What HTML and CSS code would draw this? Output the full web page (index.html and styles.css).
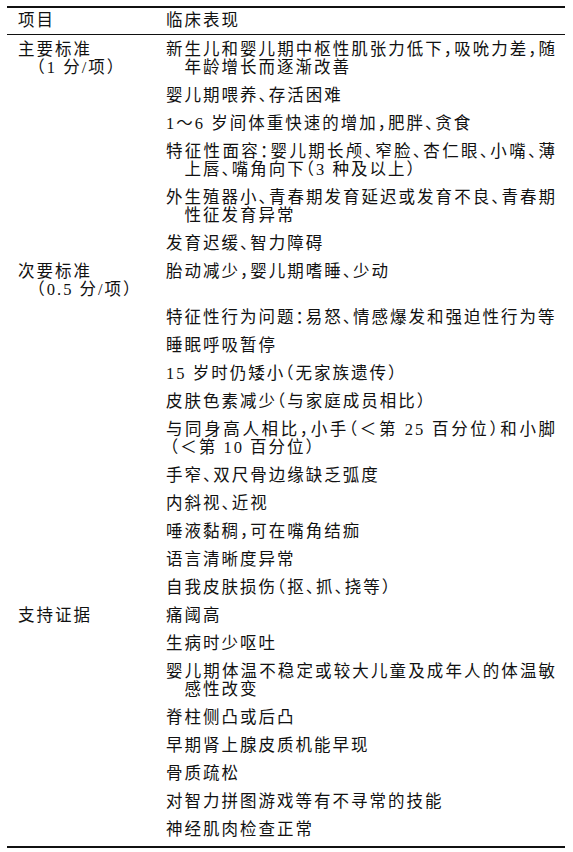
FILE: index.html
```html
<!DOCTYPE html>
<html lang="zh-CN">
<head>
<meta charset="utf-8">
<title>诊断标准</title>
<link rel="stylesheet" href="styles.css">
</head>
<body>
<div class="tbl">
  <div class="row head"><div class="c1">项目</div><div class="c2">临床表现</div></div>
  <div class="tbody">
    <div class="row"><div class="c1"><div>主要标准</div><div class="ind">（1 分/项）</div></div><div class="c2"><div class="jl">新生儿和婴儿期中枢性肌张力低下，吸吮力差，随</div><div class="ind">年龄增长而逐渐改善</div></div></div>
    <div class="row"><div class="c1"></div><div class="c2">婴儿期喂养、存活困难</div></div>
    <div class="row"><div class="c1"></div><div class="c2">1～6 岁间体重快速的增加，肥胖、贪食</div></div>
    <div class="row"><div class="c1"></div><div class="c2"><div class="jl">特征性面容：婴儿期长颅、窄脸、杏仁眼、小嘴、薄</div><div class="ind">上唇、嘴角向下（3 种及以上）</div></div></div>
    <div class="row"><div class="c1"></div><div class="c2"><div class="jl">外生殖器小、青春期发育延迟或发育不良、青春期</div><div class="ind">性征发育异常</div></div></div>
    <div class="row"><div class="c1"></div><div class="c2">发育迟缓、智力障碍</div></div>
    <div class="row"><div class="c1"><div>次要标准</div><div class="ind">（0.5 分/项）</div></div><div class="c2">胎动减少，婴儿期嗜睡、少动</div></div>
    <div class="row"><div class="c1"></div><div class="c2">特征性行为问题：易怒、情感爆发和强迫性行为等</div></div>
    <div class="row"><div class="c1"></div><div class="c2">睡眠呼吸暂停</div></div>
    <div class="row"><div class="c1"></div><div class="c2">15 岁时仍矮小（无家族遗传）</div></div>
    <div class="row"><div class="c1"></div><div class="c2">皮肤色素减少（与家庭成员相比）</div></div>
    <div class="row"><div class="c1"></div><div class="c2"><div class="jl">与同身高人相比，小手（＜第 25 百分位）和小脚</div><div class="ind-paren">（＜第 10 百分位）</div></div></div>
    <div class="row"><div class="c1"></div><div class="c2">手窄、双尺骨边缘缺乏弧度</div></div>
    <div class="row"><div class="c1"></div><div class="c2">内斜视、近视</div></div>
    <div class="row"><div class="c1"></div><div class="c2">唾液黏稠，可在嘴角结痂</div></div>
    <div class="row"><div class="c1"></div><div class="c2">语言清晰度异常</div></div>
    <div class="row"><div class="c1"></div><div class="c2">自我皮肤损伤（抠、抓、挠等）</div></div>
    <div class="row"><div class="c1">支持证据</div><div class="c2">痛阈高</div></div>
    <div class="row"><div class="c1"></div><div class="c2">生病时少呕吐</div></div>
    <div class="row"><div class="c1"></div><div class="c2"><div class="jl">婴儿期体温不稳定或较大儿童及成年人的体温敏</div><div class="ind">感性改变</div></div></div>
    <div class="row"><div class="c1"></div><div class="c2">脊柱侧凸或后凸</div></div>
    <div class="row"><div class="c1"></div><div class="c2">早期肾上腺皮质机能早现</div></div>
    <div class="row"><div class="c1"></div><div class="c2">骨质疏松</div></div>
    <div class="row"><div class="c1"></div><div class="c2">对智力拼图游戏等有不寻常的技能</div></div>
    <div class="row"><div class="c1"></div><div class="c2">神经肌肉检查正常</div></div>
  </div>
</div>
</body>
</html>
```
FILE: styles.css
```css
html, body {
  margin: 0;
  padding: 0;
  background: #ffffff;
}

body {
  font-family: "Liberation Serif", "Noto Sans CJK SC", serif;
  font-size: 16.5px;
  line-height: 18px;
  letter-spacing: 2px;
  color: #111111;
  font-feature-settings: "halt";
}

.tbl {
  margin: 6px 0 0 7px;
  width: 558px;
  border-top: 2px solid #111111;
  border-bottom: 2px solid #111111;
}

.row {
  display: grid;
  grid-template-columns: 159px 1fr;
  padding: 5.1px 0 4.9px;
}

.head {
  padding: 4px 0;
  border-bottom: 1px solid #111111;
}

.tbody {
  padding: 1px 0 2px;
}

.c1 {
  padding-left: 11px;
  white-space: nowrap;
}

.c2 {
  white-space: nowrap;
}

.ind {
  padding-left: 18.5px;
}

.ind-paren {
  padding-left: 4px;
}

.jl {
  width: 391px;
  white-space: normal;
  text-align: justify;
  text-align-last: justify;
}
```
